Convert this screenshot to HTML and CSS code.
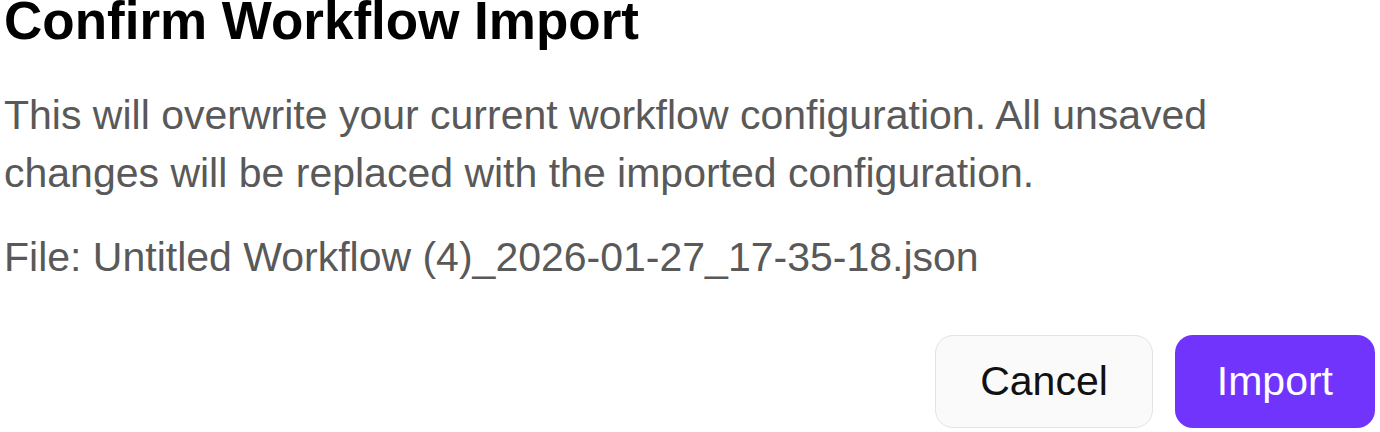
FILE: index.html
```html
<!DOCTYPE html>
<html lang="en">

<head>
    <meta charset="UTF-8">
    <meta name="viewport" content="width=device-width, initial-scale=1.0">
    <title>Confirm Workflow Import</title>
    <link rel="stylesheet" href="styles.css">
</head>

<body>

    <div class="dialog">

        <h2 class="dialog-title">Confirm Workflow Import</h2>

        <p class="dialog-text">This will overwrite your current workflow configuration. All unsaved changes will be replaced with the imported configuration.</p>

        <p class="dialog-file">File: Untitled Workflow (4)_2026-01-27_17-35-18.json</p>

        <div class="dialog-actions">
            <button class="btn btn-outline">Cancel</button>
            <button class="btn btn-primary">Import</button>
        </div>

    </div>

</body>

</html>
```

FILE: styles.css
```css
* {
    margin: 0px;
    box-sizing: border-box;
}

body {
    font-family: "Liberation Sans", Arial, Helvetica, sans-serif;
    background-color: white;
    color: #555;
}

.dialog {
    padding: 0 5px 0 4px;
    display: flex;
    flex-direction: column;
}

.dialog-title {
    font-size: 53px;
    line-height: 42px;
    font-weight: bold;
    color: #000;
}

.dialog-text,
.dialog-file {
    font-size: 41px;
    line-height: 58px;
    color: #595959;
}

.dialog-text {
    margin-top: 44px;
    max-width: 1230px;
}

.dialog-file {
    margin-top: 26px;
}

.dialog-actions {
    display: flex;
    justify-content: flex-end;
    gap: 22px;
    margin-top: 49px;
}

.btn {
    font-family: inherit;
    font-size: 41px;
    height: 93px;
    padding: 0 44px;
    border-radius: 18px;
    cursor: pointer;
}

.btn-outline {
    background-color: #fafafa;
    border: 1px solid #e3e3e3;
    color: #111;
}

.btn-primary {
    background-color: #7134fd;
    border: none;
    color: #fff;
    padding: 0 42px;
}
```
